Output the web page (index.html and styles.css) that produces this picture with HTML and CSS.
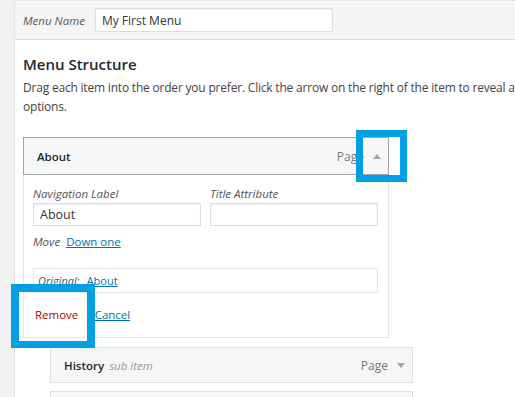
FILE: index.html
```html
<!DOCTYPE html>
<html>
<head>
    <title>Menus</title>
    <link rel="stylesheet" href="styles.css">
</head>
<body>
    <div class="menu-edit">
        <div class="menu-header">
            <label class="menu-name-label" for="menu-name">Menu Name</label>
            <input type="text" id="menu-name" class="menu-name" value="My First Menu">
        </div>

        <div class="menu-body">
            <h3>Menu Structure</h3>
            <p class="hint">Drag each item into the order you prefer. Click the arrow on the right of the item to reveal additional configuration<br>options.</p>

            <div class="menu-item active">
                <div class="item-handle">
                    <span class="item-title">About</span>
                    <span class="item-controls">
                        <span class="item-type">Page</span>
                        <span class="arrow up"></span>
                    </span>
                </div>
                <div class="item-settings">
                    <div class="field-row">
                        <div class="field">
                            <label>Navigation Label</label>
                            <input type="text" value="About">
                        </div>
                        <div class="field">
                            <label>Title Attribute</label>
                            <input type="text" value="">
                        </div>
                    </div>
                    <div class="move-row">
                        <span class="move-label">Move</span>
                        <a href="#">Down one</a>
                    </div>
                    <div class="original">
                        <span class="original-label">Original:</span>
                        <a href="#">About</a>
                    </div>
                    <div class="actions">
                        <a href="#" class="remove">Remove</a>
                        <span class="sep">|</span>
                        <a href="#" class="cancel">Cancel</a>
                    </div>
                </div>
            </div>

            <div class="menu-item sub">
                <div class="item-handle">
                    <span class="item-title">History <span class="sub-label">sub item</span></span>
                    <span class="item-controls">
                        <span class="item-type">Page</span>
                        <span class="arrow down"></span>
                    </span>
                </div>
            </div>

            <div class="menu-item sub">
                <div class="item-handle"></div>
            </div>
        </div>
    </div>

    <!-- callout boxes drawn over the screenshot -->
    <div class="callout callout-arrow"></div>
    <div class="callout callout-remove"></div>
</body>
</html>
```

FILE: styles.css
```css
body {
    margin: 0;
    background: #f1f1f1;
    font-family: 'Open Sans', sans-serif;
    font-size: 12px;
    color: #444;
    overflow: hidden;
    height: 397px;
}
a {
    color: #0073aa;
}
.menu-edit {
    margin-left: 14px;
    width: 720px;
    height: 397px;
    background: #fff;
    border-left: 1px solid #e5e5e5;
}
.menu-header {
    display: flex;
    align-items: center;
    height: 38px;
    padding-left: 8px;
    background: #f5f5f5;
    border-top: 1px solid #e5e5e5;
    border-bottom: 1px solid #dfdfdf;
}
.menu-name-label {
    font-style: italic;
    font-size: 11.5px;
    color: #555;
    margin-right: 10px;
}
.menu-name {
    width: 238px;
    height: 24px;
    box-sizing: border-box;
    padding: 0 6px;
    border: 1px solid #ddd;
    border-radius: 2px;
    box-shadow: inset 0 1px 2px rgba(0, 0, 0, 0.07);
    font-family: 'Open Sans', sans-serif;
    font-size: 12px;
    color: #32373c;
}
.menu-body {
    padding: 0 8px;
}
h3 {
    margin: 13px 0 0;
    font-size: 15px;
    font-weight: 600;
    color: #23282d;
    line-height: 22px;
}
.hint {
    white-space: nowrap;
    letter-spacing: -0.2px;
    margin: 3px 0 21px;
    line-height: 19px;
}
.menu-item {
    width: 366px;
}
.item-handle {
    display: flex;
    justify-content: space-between;
    align-items: center;
    height: 36px;
    padding: 0 7px 0 13px;
    background: #f7f7f7;
    border: 1px solid #a0a5aa;
}
.item-title {
    font-size: 11.5px;
    font-weight: 600;
    color: #23282d;
}
.sub-label {
    font-weight: 400;
    font-style: italic;
    color: #999;
    margin-left: 2px;
}
.item-controls {
    display: flex;
    align-items: center;
    color: #777;
}
.item-type {
    margin-right: 9px;
}
.arrow {
    width: 0;
    height: 0;
    border-left: 4px solid transparent;
    border-right: 4px solid transparent;
}
.arrow.up {
    border-bottom: 5px solid #a0a5aa;
}
.arrow.down {
    border-top: 5px solid #a0a5aa;
}
.item-settings {
    padding: 9px 9px 12px;
    border: 1px solid #e5e5e5;
    border-top: none;
}
.field-row {
    display: flex;
    gap: 9px;
}
.field {
    width: 168px;
}
.field label {
    display: block;
    font-style: italic;
    font-size: 11.5px;
    color: #555;
    line-height: 19px;
}
.field input {
    width: 168px;
    height: 23px;
    box-sizing: border-box;
    padding: 0 6px;
    border: 1px solid #ddd;
    box-shadow: inset 0 1px 2px rgba(0, 0, 0, 0.07);
    font-family: 'Open Sans', sans-serif;
    font-size: 12.5px;
    color: #32373c;
}
.move-row {
    margin-top: 7px;
    line-height: 18px;
    font-size: 11.5px;
}
.move-label {
    font-style: italic;
    color: #555;
    margin-right: 3px;
}
.original {
    margin-top: 17px;
    width: 345px;
    height: 25px;
    box-sizing: border-box;
    padding: 0 4px;
    display: flex;
    align-items: center;
    border: 1px solid #e5e5e5;
    font-size: 11px;
}
.original-label {
    font-style: italic;
    color: #555;
    margin-right: 7px;
}
.actions {
    margin-top: 12px;
    padding-left: 2px;
    line-height: 20px;
    font-size: 11.5px;
}
.remove {
    color: #a00;
    text-decoration: none;
}
.sep {
    color: #777;
    margin: 0 1px 0 3px;
}
.menu-item.sub {
    margin-left: 27px;
    margin-top: 9px;
    width: 363px;
}
.menu-item.sub .item-handle {
    height: 34px;
    background: #f6f6f6;
    border-color: #dfdfdf;
}
.menu-item.sub + .menu-item.sub {
    margin-top: 8px;
}
.callout {
    position: absolute;
    border-style: solid;
    border-color: #00a0e3;
    box-sizing: border-box;
}
.callout-arrow {
    left: 356px;
    top: 130px;
    width: 51px;
    height: 52px;
    border-width: 7px;
}
.callout-remove {
    left: 11px;
    top: 284px;
    width: 84px;
    height: 64px;
    border-width: 8px 8px 7px;
}
```
